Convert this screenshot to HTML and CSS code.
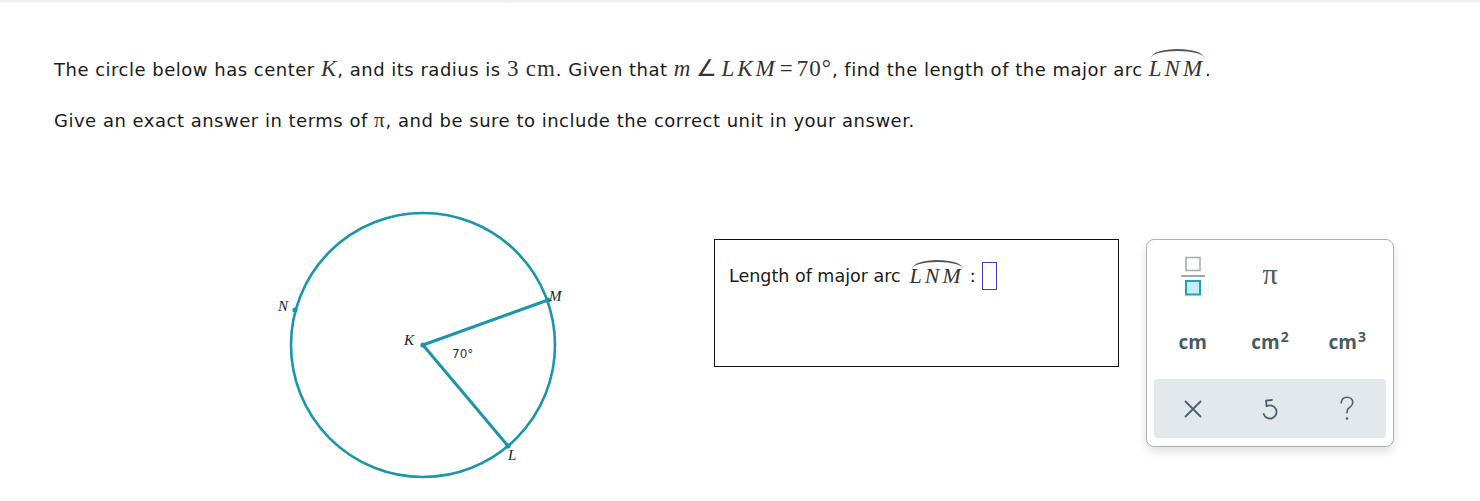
FILE: index.html
```html
<!DOCTYPE html>
<html>
<head>
<meta charset="utf-8">
<link rel="stylesheet" href="styles.css">
</head>
<body>
<div class="topline"></div>
<main class="content">
  <p class="line">The circle below has center <span class="mi k">K</span>, and its radius is <span class="mn">3</span> <span class="mn">cm</span>. Given that <span class="mi m">m</span><span class="mo">∠</span><span class="mi">LKM</span><span class="mo eq">=</span><span class="mn">70°</span>, find the length of the major arc <span class="arc"><span class="mi">LNM</span></span>.</p>
  <p class="line second">Give an exact answer in terms of <span class="mi pi">π</span>, and be sure to include the correct unit in your answer.</p>

  <div class="figure-row">
    <svg class="diagram" width="310" height="290" viewBox="0 0 310 290">
      <circle cx="153" cy="145" r="132" fill="none" stroke="#1a96ab" stroke-width="2.6"/>
      <line x1="153" y1="145" x2="278" y2="100" stroke="#1a96ab" stroke-width="3"/>
      <line x1="153" y1="145" x2="238" y2="246" stroke="#1a96ab" stroke-width="3"/>
      <circle cx="153" cy="145" r="2.6" fill="#1a96ab"/>
      <circle cx="278" cy="100" r="2.6" fill="#1a96ab"/>
      <circle cx="238" cy="246" r="2.6" fill="#1a96ab"/>
      <circle cx="25" cy="110" r="2.6" fill="#1a96ab"/>
      <text x="8" y="111" class="lbl">N</text>
      <text x="279" y="101" class="lbl">M</text>
      <text x="134" y="145" class="lbl">K</text>
      <text x="238" y="260" class="lbl">L</text>
      <text x="182" y="158" class="deg">70°</text>
    </svg>

    <div class="answer-box">
      <div class="answer-line">
        <span>Length of major arc</span>
        <span class="arc small"><span class="mi">LNM</span></span>
        <span class="colon">:</span>
        <span class="input"></span>
      </div>
    </div>

    <div class="keypad">
      <div class="keys">
        <div class="key">
          <svg width="26" height="40" viewBox="0 0 26 40">
            <rect x="6" y="1.5" width="14" height="13" fill="none" stroke="#a2aaae" stroke-width="1.5"/>
            <line x1="1" y1="20" x2="25" y2="20" stroke="#7f8a90" stroke-width="1.5"/>
            <rect x="6" y="25" width="14" height="13.5" fill="#c8ecf6" stroke="#24a0b2" stroke-width="2"/>
          </svg>
        </div>
        <div class="key pi-key">π</div>
        <div class="key"></div>
        <div class="key unit"><span>cm</span></div>
        <div class="key unit"><span>cm<sup>2</sup></span></div>
        <div class="key unit"><span>cm<sup>3</sup></span></div>
      </div>
      <div class="actions">
        <div class="key act">
          <svg width="18" height="18" viewBox="0 0 18 18">
            <path d="M1.5 1.5 L16.5 16.5 M16.5 1.5 L1.5 16.5" stroke="#4a616c" stroke-width="1.8" fill="none" stroke-linecap="round"/>
          </svg>
        </div>
        <div class="key act">
          <svg width="16" height="24" viewBox="0 0 16 24">
            <path d="M4.6 9.2 A6.6 6.6 0 1 1 1.6 16.8" stroke="#4a616c" stroke-width="1.8" fill="none" stroke-linecap="round"/>
            <path d="M4 3.6 L4.6 9.2 M4 3.6 L10 3" stroke="#4a616c" stroke-width="1.8" fill="none" stroke-linecap="round" stroke-linejoin="round"/>
          </svg>
        </div>
        <div class="key act">
          <svg width="16" height="26" viewBox="0 0 16 26">
            <path d="M2.2 7 C2.2 3.2 5 1.2 8 1.2 C11.2 1.2 13.8 3.3 13.8 6.5 C13.8 9.8 11 10.8 9.2 12.6 C8.3 13.5 8 14.6 8 16.8" stroke="#4a616c" stroke-width="1.6" fill="none" stroke-linecap="round"/>
            <circle cx="8" cy="22.5" r="1.3" fill="#4a616c"/>
          </svg>
        </div>
      </div>
    </div>
  </div>
</main>
</body>
</html>
```

FILE: styles.css
```css
html, body {
  margin: 0;
  padding: 0;
  background: #ffffff;
}

body {
  font-family: "DejaVu Sans", Verdana, sans-serif;
  color: #1a1a1a;
}

.topline {
  height: 3px;
  background: linear-gradient(#ececec, #f7f7f7);
}

.content {
  padding: 54px 0 0 54px;
}

.line {
  margin: 0;
  height: 24px;
  font-size: 18px;
  letter-spacing: 0.5px;
  line-height: 24px;
  white-space: nowrap;
}

.line.second {
  margin-top: 28px;
}

.mi,
.mn,
.mo {
  font-family: "Liberation Serif", "Times New Roman", serif;
  font-size: 23px;
  line-height: 1;
  color: #333;
  letter-spacing: 1px;
}

.mi {
  font-style: italic;
  letter-spacing: 3px;
}

.mi.k {
  letter-spacing: 0;
  margin-right: 1px;
}

.mi.m {
  margin-right: 1px;
}

.mo {
  margin: 0 3px 0 2px;
}

.mo.eq {
  margin: 0 3px 0 2px;
}

.mi.pi {
  font-style: normal;
  font-size: 21px;
  letter-spacing: 1px;
}

.arc {
  position: relative;
  display: inline-block;
}

.arc::before {
  content: "";
  position: absolute;
  left: 2px;
  right: 1px;
  top: -8px;
  height: 7px;
  border-top: 2px solid #555;
  border-radius: 50% 50% 0 0 / 100% 100% 0 0;
}

.figure-row {
  display: flex;
  align-items: flex-start;
  margin-top: 67px;
  padding-left: 216px;
}

.diagram {
  display: block;
  flex: none;
}

.lbl {
  font-family: "Liberation Serif", "Times New Roman", serif;
  font-style: italic;
  font-size: 15px;
  fill: #222;
}

.deg {
  font-family: "DejaVu Sans", Verdana, sans-serif;
  font-size: 12px;
  fill: #333;
}

.answer-box {
  box-sizing: border-box;
  flex: none;
  width: 405px;
  height: 128px;
  margin: 39px 0 0 134px;
  border: 1px solid #111;
  padding: 22px 0 0 14px;
}

.answer-line {
  display: flex;
  align-items: center;
  height: 28px;
  font-size: 17.5px;
  white-space: nowrap;
}

.answer-line .arc {
  margin-left: 9px;
}

.answer-line .arc::before {
  top: -5px;
}

.answer-line .mi {
  font-size: 22px;
}

.colon {
  margin: 0 6px 0 6px;
  font-size: 17.5px;
}

.input {
  display: inline-block;
  box-sizing: border-box;
  width: 15px;
  height: 28px;
  border: 1.5px solid #3a3fc0;
}

.keypad {
  box-sizing: border-box;
  flex: none;
  width: 248px;
  height: 208px;
  margin: 39px 0 0 27px;
  border: 1px solid #a8b3b7;
  border-radius: 8px;
  background: #fff;
  box-shadow: 0 5px 10px rgba(0, 0, 0, 0.12);
  padding: 7px;
  display: flex;
  flex-direction: column;
}

.keys {
  display: grid;
  grid-template-columns: repeat(3, 1fr);
  grid-template-rows: 58px 70px;
}

.key {
  display: flex;
  align-items: center;
  justify-content: center;
}

.pi-key {
  font-family: "Liberation Serif", "Times New Roman", serif;
  font-size: 30px;
  line-height: 1;
  color: #4b5a63;
  padding-bottom: 4px;
}

.unit {
  font-family: "Open Sans", Lato, sans-serif;
  font-weight: 700;
  font-size: 19px;
  color: #4a5a62;
  padding-top: 4px;
}

.unit sup {
  font-size: 14px;
  line-height: 1;
  vertical-align: 7px;
  margin-left: 1px;
}

.actions {
  margin-top: 4px;
  height: 59px;
  border-radius: 4px;
  background: #e2e8eb;
  display: grid;
  grid-template-columns: repeat(3, 1fr);
}
```
